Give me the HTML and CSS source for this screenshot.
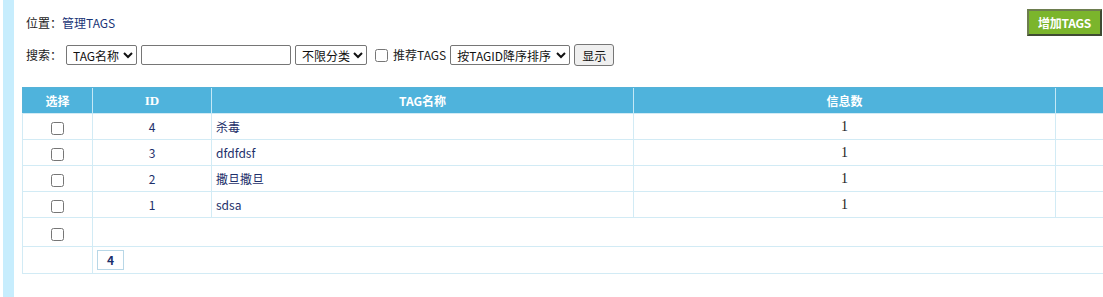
FILE: index.html
```html
<!DOCTYPE html>
<html lang="zh">
<head>
<meta charset="utf-8">
<title>管理TAGS</title>
<link rel="stylesheet" href="styles.css">
</head>
<body>
<div class="page">
  <div class="sidebar"></div>
  <div class="main">
    <div class="topbar">
      <div class="crumb">位置：<a class="link" href="#">管理TAGS</a></div>
      <a class="add-btn" href="#">增加TAGS</a>
    </div>
    <form class="search">
      <span class="label">搜索：</span>
      <select class="sel sel-type"><option>TAG名称</option></select>
      <input class="txt" type="text">
      <select class="sel sel-cat"><option>不限分类</option></select>
      <input class="chk chk-rec" type="checkbox">
      <span class="label">推荐TAGS</span>
      <select class="sel sel-order"><option>按TAGID降序排序</option></select>
      <button class="show-btn" type="button">显示</button>
    </form>
    <table class="grid">
      <colgroup>
        <col class="c-sel"><col class="c-id"><col class="c-name"><col class="c-num"><col class="c-last">
      </colgroup>
      <thead>
        <tr><th>选择</th><th class="serif">ID</th><th>TAG名称</th><th>信息数</th><th></th></tr>
      </thead>
      <tbody>
        <tr><td class="center"><input class="chk" type="checkbox"></td><td class="center">4</td><td>杀毒</td><td class="center num">1</td><td></td></tr>
        <tr><td class="center"><input class="chk" type="checkbox"></td><td class="center">3</td><td>dfdfdsf</td><td class="center num">1</td><td></td></tr>
        <tr><td class="center"><input class="chk" type="checkbox"></td><td class="center">2</td><td>撒旦撒旦</td><td class="center num">1</td><td></td></tr>
        <tr><td class="center"><input class="chk" type="checkbox"></td><td class="center">1</td><td>sdsa</td><td class="center num">1</td><td></td></tr>
        <tr class="tall"><td class="center"><input class="chk" type="checkbox"></td><td colspan="4"></td></tr>
        <tr class="pager-row"><td></td><td colspan="4"><span class="pager">4</span></td></tr>
      </tbody>
    </table>
  </div>
</div>
</body>
</html>
```
FILE: styles.css
```css
html, body {
  margin: 0;
  padding: 0;
  background: #fff;
}
body {
  font-family: "Noto Sans CJK SC", "Microsoft YaHei", sans-serif;
  font-size: 12px;
  color: #333;
}
.page {
  display: flex;
  min-height: 297px;
  width: 1120px;
}
.sidebar {
  width: 11px;
  margin-left: 3px;
  background: #c7edfd;
  flex: none;
}
.main {
  flex: 1;
  min-width: 0;
  padding: 9px 0 0 8px;
}
.topbar {
  display: flex;
  justify-content: space-between;
  align-items: center;
  height: 27px;
  padding-right: 18px;
}
.crumb {
  padding-left: 4px;
  line-height: 16px;
  color: #222;
}
.link {
  color: #1a3577;
  text-decoration: none;
}
.add-btn {
  display: block;
  box-sizing: border-box;
  width: 75px;
  height: 27px;
  line-height: 23px;
  text-align: center;
  background: #7bb52c;
  border: 2px solid #3f4a33;
  border-top-color: #6d7d4f;
  border-left-color: #6d7d4f;
  color: #fff;
  font-weight: bold;
  font-size: 12px;
  letter-spacing: -0.3px;
  text-decoration: none;
}
.search {
  display: flex;
  align-items: center;
  height: 24px;
  margin-top: 7px;
  padding-left: 4px;
}
.label {
  color: #222;
  line-height: 16px;
}
.sel, .txt {
  box-sizing: border-box;
  height: 20px;
  font-family: "Noto Sans CJK SC", sans-serif;
  font-size: 12px;
  color: #111;
  border: 1px solid #767676;
  border-radius: 2px;
  background: #fff;
  padding: 0 0 0 2px;
  margin: 0;
}
.sel-type { width: 71px; margin-left: 4px; }
.txt { width: 150px; margin-left: 4px; }
.sel-cat { width: 72px; margin-left: 4px; }
.chk {
  width: 13px;
  height: 13px;
  margin: 0;
}
.chk-rec { margin: 0 5px 0 8px; }
.sel-order { width: 120px; margin-left: 4px; }
.show-btn {
  box-sizing: border-box;
  width: 40px;
  height: 22px;
  margin-left: 4px;
  font-family: "Noto Sans CJK SC", sans-serif;
  font-size: 12px;
  color: #111;
  background: #efefef;
  border: 1px solid #767676;
  border-radius: 3px;
  padding: 0;
}
.grid {
  margin-top: 20px;
  border-collapse: collapse;
  table-layout: fixed;
  width: 1098px;
  border: 1px solid #55b2d8;
}
.c-sel { width: 70px; }
.c-id { width: 119px; }
.c-name { width: 422px; }
.c-num { width: 422px; }
.grid th {
  height: 25px;
  background: #4fb3dc;
  color: #fff;
  font-weight: bold;
  font-size: 12px;
  border-left: 1px solid #c4e8f6;
  border-top: 1px solid #55b2d8;
  padding: 0;
}
.grid th:first-child { border-left: none; }
.grid th.serif {
  font-family: "Liberation Serif", serif;
  font-size: 13px;
}
.grid td {
  height: 25px;
  border: 1px solid #d2ebf5;
  padding: 0 0 0 4px;
  color: #1d2f6a;
  font-size: 12px;
}
.grid td.center {
  text-align: center;
  padding: 0;
}
.grid td.num {
  font-family: "Liberation Serif", serif;
  font-size: 14px;
  color: #222;
}
.grid td .chk { vertical-align: middle; }
.grid tr.tall td { height: 28px; }
.grid tr.pager-row td { height: 26px; }
.pager {
  display: inline-block;
  box-sizing: border-box;
  width: 27px;
  height: 20px;
  line-height: 18px;
  text-align: center;
  border: 1px solid #b8d7e7;
  font-weight: bold;
  color: #1d2f6a;
  font-size: 12px;
}
```
